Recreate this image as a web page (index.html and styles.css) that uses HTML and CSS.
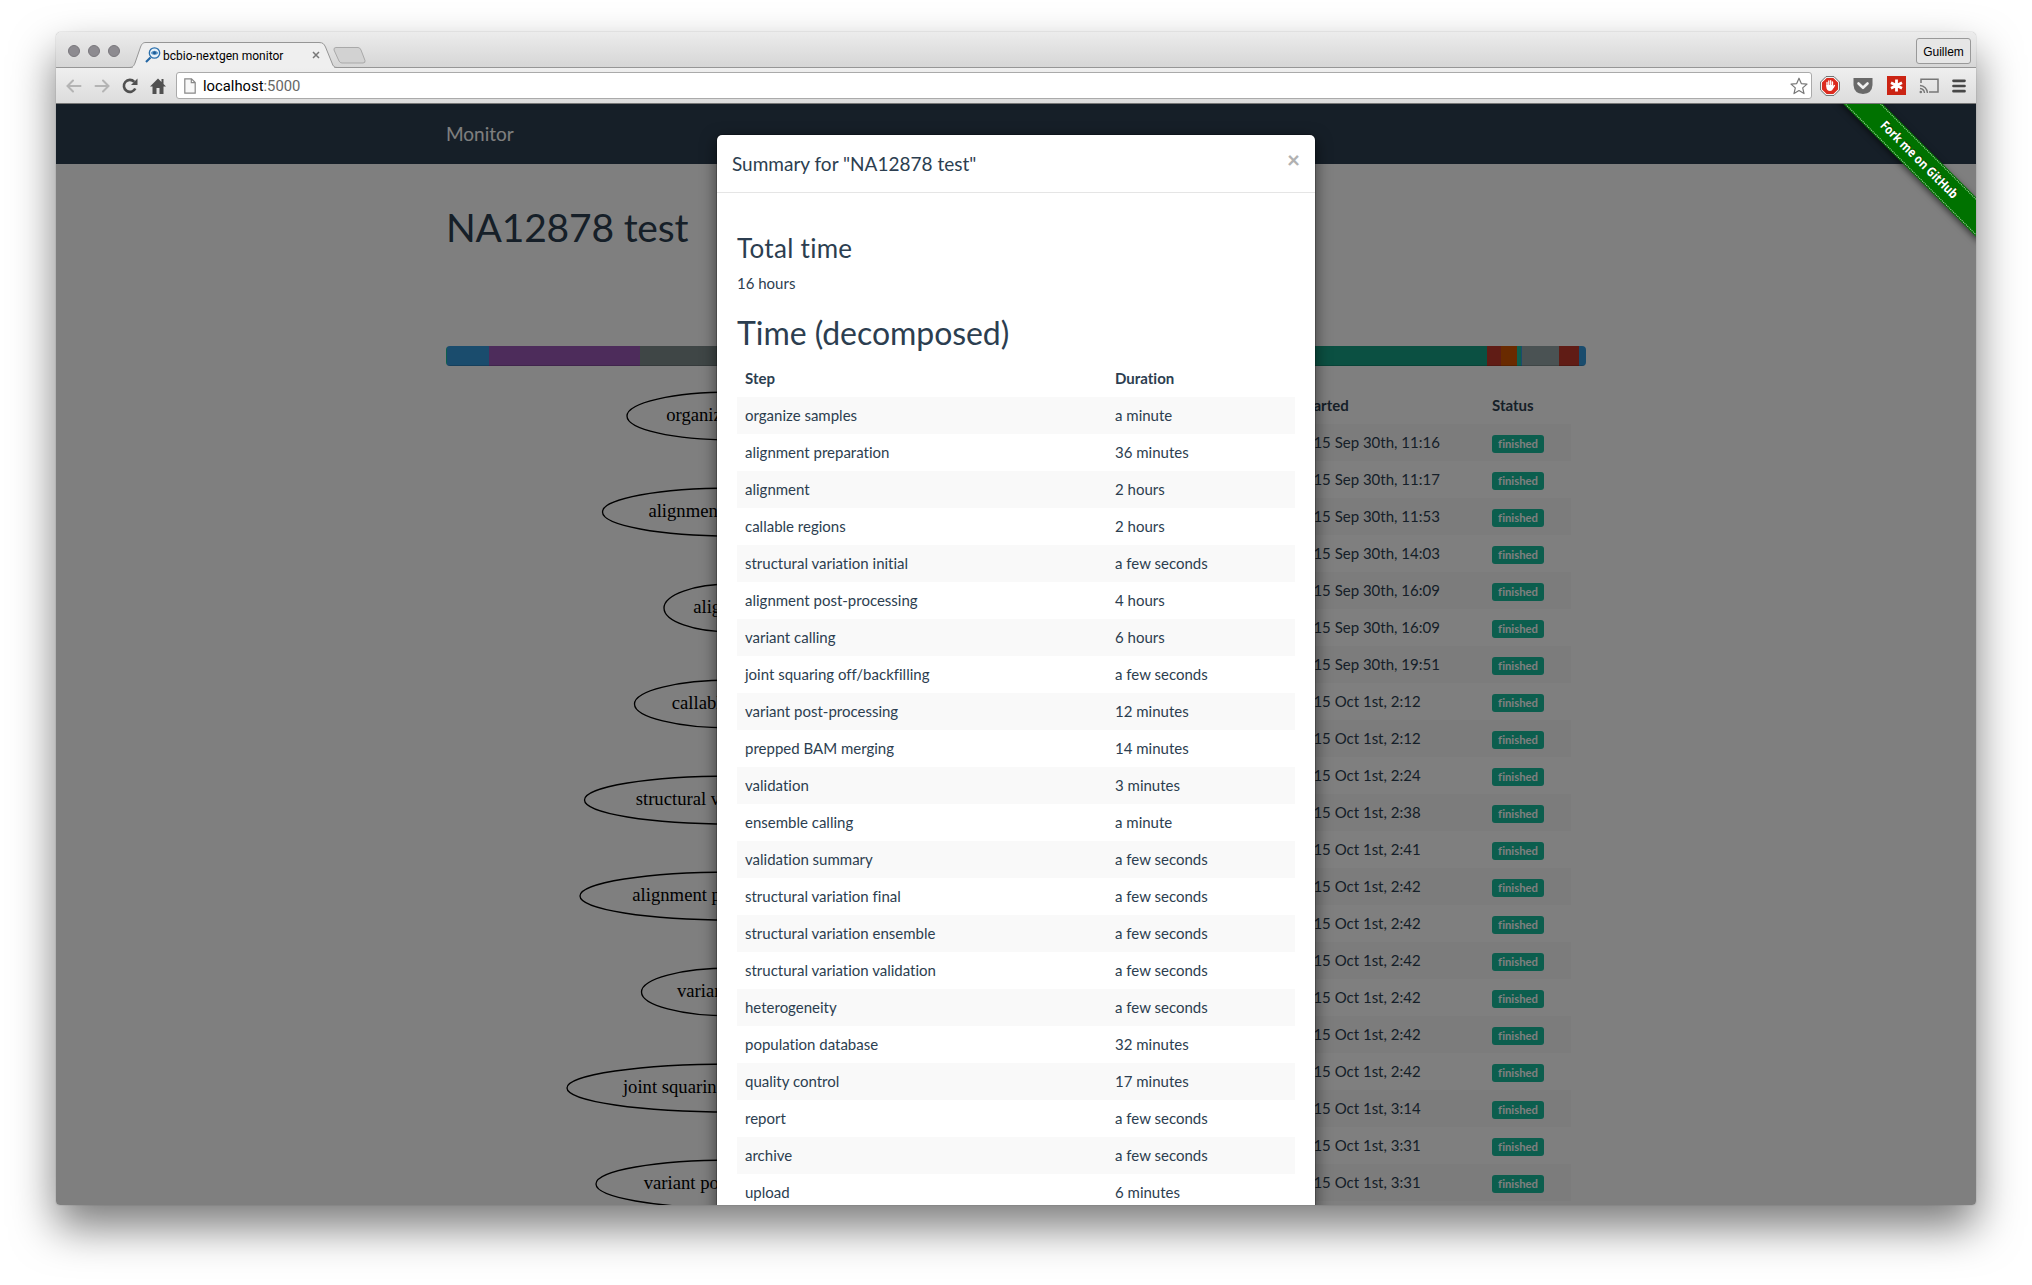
FILE: index.html
```html
<!DOCTYPE html>
<html lang="en">
<head>
<meta charset="utf-8">
<title>bcbio-nextgen monitor</title>
<link rel="stylesheet" href="styles.css">
</head>
<body>
<div class="window">
  <header class="tabstrip">
    <div class="lights"><i></i><i></i><i></i></div>
    <div class="tab">
      <svg class="tab-shape" width="208" height="26" viewBox="0 0 208 26"><path d="M0 25.500C4 25.500 5 23.500 6 21L11.500 5C13 1.500 14 .5 17 .5H190C194 .5 195 2 196.500 5L203 21C204 24 205 25.500 208 25.500" fill="#efefef" stroke="#969696"/><path d="M4 25.500H205" stroke="#efefef" stroke-width="1.500"/></svg>
      <svg class="favicon" width="16" height="16" viewBox="0 0 16 16"><path d="M1 15L5.500 10.500" stroke="#2467a4" stroke-width="2.200"/><circle cx="9.500" cy="6" r="5.200" fill="#e8f1f8" stroke="#2b70ad" stroke-width="1.300"/><path d="M5.500 6Q9.500 1.500 13.500 6Q9.500 10 5.500 6Z" fill="#5b95c6"/><circle cx="9.500" cy="5.800" r="1.500" fill="#1c5a94"/></svg>
      <span class="tab-title">bcbio-nextgen monitor</span>
      <svg class="tab-close" width="8" height="8" viewBox="0 0 8 8"><path d="M1 1L7 7M7 1L1 7" stroke="#777" stroke-width="1.500"/></svg>
    </div>
    <svg class="newtab" width="33" height="17" viewBox="0 0 33 17"><path d="M3 .5H25Q27 .5 28 3L32 13.500Q32.500 16 30 16H9Q7 16 6 14L1 3Q.5 .5 3 .5Z" fill="#d2d2d2" stroke="#a9a9a9"/></svg>
    <span class="profile">Guillem</span>
  </header>
  <div class="toolbar">
    <div class="nav-icons">
      <svg width="16" height="14" viewBox="0 0 16 14"><path d="M7 1.500L1.500 7L7 12.500M2 7H14.500" fill="none" stroke="#b4b4b4" stroke-width="2" stroke-linecap="round"/></svg>
      <svg width="16" height="14" viewBox="0 0 16 14"><path d="M9 1.500L14.500 7L9 12.500M14 7H1.500" fill="none" stroke="#b4b4b4" stroke-width="2" stroke-linecap="round"/></svg>
      <svg width="16" height="16" viewBox="0 0 16 16"><path d="M13.300 10.500A6 6 0 1 1 12.300 3.800" fill="none" stroke="#505050" stroke-width="2.600"/><path d="M15.500 .5V7H9Z" fill="#505050"/></svg>
      <svg width="16" height="16" viewBox="0 0 16 16"><path d="M8 .5L0 8.500H2.500V16H6.500V10H9.500V16H13.500V8.500H16L13.500 6V1H11.500V4Z" fill="#505050"/></svg>
    </div>
    <div class="omnibox">
      <svg width="12" height="16" viewBox="0 0 12 16"><path d="M.8 .8H7.500L11.200 4.500V15.200H.8ZM7.300 .8V4.700H11.200" fill="#f8f8f8" stroke="#888" stroke-width="1.200"/></svg>
      <span class="url">localhost<b>:5000</b></span>
      <svg class="star" width="18" height="18" viewBox="0 0 18 18"><path d="M9 1.200L11.300 6.600L17 7.100L12.700 10.900L14 16.600L9 13.600L4 16.600L5.300 10.900L1 7.100L6.700 6.600Z" fill="#fff" stroke="#777" stroke-width="1.200" stroke-linejoin="round"/></svg>
    </div>
    <div class="extensions">
      <svg width="20" height="20" viewBox="0 0 20 20"><path d="M6 .6H14L19.400 6V14L14 19.400H6L.6 14V6Z" fill="#fff" stroke="#666"/><path d="M6.600 2H13.400L18 6.600V13.400L13.400 18H6.600L2 13.400V6.600Z" fill="#dc2b1e"/><path d="M7 10V6.500M8.800 10V5M10.700 10V4.700M12.500 10V6M13.300 11.500L14.500 9.500" stroke="#fff" stroke-width="1.300" stroke-linecap="round"/><path d="M6.300 9H13.200L13.800 10.800Q12.800 15 10 15Q6.600 15 6.300 11Z" fill="#fff"/></svg>
      <svg width="20" height="18" viewBox="0 0 20 18"><path d="M.5 1H19.500V8Q19 16.500 10 17Q1 16.500 .5 8Z" fill="#696969"/><path d="M5.500 6.500L10 10.800L14.500 6.500" fill="none" stroke="#f0f0f0" stroke-width="2.600" stroke-linecap="round" stroke-linejoin="round"/></svg>
      <svg width="19" height="19" viewBox="0 0 19 19"><rect width="19" height="19" fill="#cb2413"/><path d="M9.500 3.500V15.500M4 6.800L15 12.200M15 6.800L4 12.200" stroke="#fff" stroke-width="2.800"/></svg>
      <svg width="20" height="16" viewBox="0 0 20 16"><path d="M2 5V1.200H19V14H10" fill="none" stroke="#777" stroke-width="1.500"/><path d="M1 7.500A8 8 0 0 1 8.500 15M1 10.500A5 5 0 0 1 5.500 15" fill="none" stroke="#777" stroke-width="1.400"/><circle cx="1.800" cy="14" r="1.300" fill="#777"/></svg>
      <svg width="14" height="14" viewBox="0 0 14 14"><path d="M1.500 1.800H12.500M1.500 7H12.500M1.500 12.200H12.500" stroke="#484848" stroke-width="2.700" stroke-linecap="round"/></svg>
    </div>
  </div>
  <main class="page">
    <nav class="navbar"><div class="container">Monitor</div></nav>
    <div class="container">
      <h1>NA12878 test</h1>
      <div class="progress" id="progress"></div>
      <div class="columns">
        <svg class="graph" id="graph" width="570" height="900"></svg>
        <table class="table runs">
          <colgroup><col class="c-step"><col class="c-start"><col></colgroup>
          <thead><tr><th></th><th class="started">Started</th><th>Status</th></tr></thead>
          <tbody id="runs"></tbody>
        </table>
      </div>
    </div>
    <div class="backdrop"></div>
    <section class="modal">
      <div class="modal-header"><h4>Summary for "NA12878 test"</h4><span class="close">×</span></div>
      <div class="modal-body">
        <h3>Total time</h3>
        <p>16 hours</p>
        <h2>Time (decomposed)</h2>
        <table class="table">
          <colgroup><col class="c-name"><col></colgroup>
          <thead><tr><th>Step</th><th>Duration</th></tr></thead>
          <tbody id="steps"></tbody>
        </table>
      </div>
    </section>
    <div class="ribbon"><div class="ribbon-edge"><span>Fork me on GitHub</span></div></div>
  </main>
</div>
<script src="app.js"></script>
</body>
</html>
```
FILE: styles.css
```css
* { box-sizing: border-box; }
html, body { height: 100%; }
body {
  margin: 0;
  padding: 32px 56px 80px;
  overflow: hidden;
  background: #fff;
  color: #2c3e50;
  font: 15px/1.42857 Lato, sans-serif;
  font-variant-ligatures: none;
}
.window {
  height: 1173px;
  display: flex;
  flex-direction: column;
  border-radius: 5px 5px 4px 4px;
  box-shadow: 0 0 1px rgba(0,0,0,.5), 0 22px 44px rgba(0,0,0,.52);
}
.tabstrip {
  height: 36px;
  display: flex;
  align-items: flex-end;
  border-radius: 5px 5px 0 0;
  background: linear-gradient(#ececec, #d6d6d6);
  border-bottom: 1px solid #969696;
  font-family: Roboto, sans-serif;
  color: #000;
}
.lights { display: flex; gap: 8px; padding: 0 9px 10px 12px; }
.lights i { width: 12px; height: 12px; border-radius: 50%; background: #8d8b90; border: 1px solid #79777c; }
.tab { position: relative; display: flex; align-items: center; width: 208px; height: 26px; margin-bottom: -1px; padding: 0 17px 0 16px; gap: 2px; }
.tab-shape { position: absolute; left: 0; top: 0; }
.favicon, .tab-title, .tab-close { position: relative; }
.tab-title { flex: 1; padding-top: 2px; font-size: 12px; letter-spacing: .02px; white-space: nowrap; line-height: 24px; }
.newtab { margin: 0 auto 3px -4px; }
.profile { width: 55px; height: 26px; margin: 0 5px 3px 0; border: 1px solid #999; border-radius: 3px; font: 12px/26px "Liberation Sans", sans-serif; text-align: center; background: #e6e6e6; }
.toolbar {
  height: 36px;
  display: flex;
  align-items: center;
  padding: 0 10px;
  background: linear-gradient(#efefef, #dcdcdc);
  border-bottom: 1px solid #777;
}
.nav-icons { display: flex; gap: 12px; width: 110px; align-items: center; }
.omnibox { flex: 1; height: 27px; display: flex; align-items: center; padding: 0 3px 0 7px; gap: 7px; background: #fff; border: 1px solid #aaa; border-radius: 3px; }
.url { font: 14.800px/26px Roboto, sans-serif; color: #000; flex: 1; padding-top: 1px; }
.url b { font-weight: 400; color: #666; }
.extensions { display: flex; align-items: center; gap: 13.200px; padding-left: 8.500px; }
.page { position: relative; flex: 1; min-height: 0; overflow: hidden; background: #fff; border-radius: 0 0 4px 4px; }
.container { width: 1140px; margin: 0 auto; }
.navbar { height: 60px; background: #2c3e50; color: #fff; font-size: 19px; line-height: 60px; }
h1, h2, h3, h4 { font-weight: 400; line-height: 1.1; margin: 21px 0 10.500px; }
h1 { font-size: 39px; letter-spacing: -.2px; margin: 42px 0 97px; }
h2 { font-size: 32px; }
h3 { font-size: 26px; letter-spacing: .3px; }
p { margin: 0 0 10.500px; }
.progress { display: flex; height: 20px; border-radius: 4px; overflow: hidden; margin-bottom: 21px; }
.progress i { height: 20px; flex: none; box-shadow: inset 0 -1px 0 rgba(0,0,0,.15); }
.columns { display: flex; gap: 15px; align-items: flex-start; }
.graph { flex: none; font: 18.667px "Liberation Serif", serif; }
.graph ellipse { fill: none; stroke: #000; stroke-width: 1.333; }
.graph text { text-anchor: middle; }
.graph line { stroke: #000; stroke-width: 1.333; }
.table { width: 100%; border-collapse: collapse; table-layout: fixed; }
.table th, .table td { height: 37px; padding: 8px; line-height: 21px; text-align: left; }
.table tbody tr:nth-child(odd) { background: #f9f9f9; }
.runs { width: 540px; }
.c-step { width: 257px; }
.c-start { width: 196px; }
.c-name { width: 370px; }
.table .started { padding-left: 12px; }
.table .status { padding: 0 8px; line-height: 0; vertical-align: top; }
.label { display: inline-block; width: 52px; height: 18px; margin-top: 11px; border-radius: 3px; background: #18bc9c; color: #fff; font-size: 11.250px; font-weight: 700; line-height: 18px; text-align: center; }
.backdrop { position: absolute; inset: 0; background: rgba(0,0,0,.5); }
.modal { position: absolute; left: 660px; top: 30px; width: 600px; height: 1200px; background: #fff; background-clip: padding-box; border: 1px solid rgba(0,0,0,.2); border-radius: 6px; box-shadow: 0 5px 15px rgba(0,0,0,.5); }
.modal-header { height: 58px; display: flex; justify-content: space-between; padding: 15px; border-bottom: 1px solid #e5e5e5; }
.modal-header h4 { margin: 0; font-size: 19px; line-height: 27px; }
.close { font-size: 22.500px; font-weight: 900; line-height: 1; margin-top: -1px; color: #000; opacity: .3; }
.modal-body { padding: 20px; }
.modal-body h2 { margin: 20px 0 10.500px; letter-spacing: -.05px; }
.ribbon { position: absolute; top: 42px; right: -43px; width: 200px; height: 28px; padding: 1px 0; background: #007200; box-shadow: 0 2px 6px rgba(0,0,0,.55); transform: rotate(45deg); }
.ribbon-edge { height: 26px; border: 1px dotted rgba(255,255,255,.7); border-width: 1px 0; color: #fff; font: 700 13px/23px "Noto Sans", sans-serif; text-align: center; text-shadow: 0 -1px rgba(0,0,0,.5); }
.ribbon span { display: inline-block; transform: scaleX(.85); }
```
FILE: app.js
```js
const steps = [
  ['organize samples', 'a minute', 'Sep 30th, 11:16', 104],
  ['alignment preparation', '36 minutes', 'Sep 30th, 11:17', 128.5],
  ['alignment', '2 hours', 'Sep 30th, 11:53', 67],
  ['callable regions', '2 hours', 'Sep 30th, 14:03', 96.5],
  ['structural variation initial', 'a few seconds', 'Sep 30th, 16:09', 146.5],
  ['alignment post-processing', '4 hours', 'Sep 30th, 16:09', 151],
  ['variant calling', '6 hours', 'Sep 30th, 19:51', 89.5],
  ['joint squaring off/backfilling', 'a few seconds', 'Oct 1st, 2:12', 164],
  ['variant post-processing', '12 minutes', 'Oct 1st, 2:12', 135],
  ['prepped BAM merging', '14 minutes', 'Oct 1st, 2:24'],
  ['validation', '3 minutes', 'Oct 1st, 2:38'],
  ['ensemble calling', 'a minute', 'Oct 1st, 2:41'],
  ['validation summary', 'a few seconds', 'Oct 1st, 2:42'],
  ['structural variation final', 'a few seconds', 'Oct 1st, 2:42'],
  ['structural variation ensemble', 'a few seconds', 'Oct 1st, 2:42'],
  ['structural variation validation', 'a few seconds', 'Oct 1st, 2:42'],
  ['heterogeneity', 'a few seconds', 'Oct 1st, 2:42'],
  ['population database', '32 minutes', 'Oct 1st, 2:42'],
  ['quality control', '17 minutes', 'Oct 1st, 3:14'],
  ['report', 'a few seconds', 'Oct 1st, 3:31'],
  ['archive', 'a few seconds', 'Oct 1st, 3:31'],
  ['upload', '6 minutes', null]
];
const segments = [
  [1, '#18bc9c'], [42, '#3498db'], [151, '#9b59b6'], [160, '#7f8c8d'], [687, '#16a085'],
  [14, '#c0392b'], [16, '#d35400'], [4, '#1abc9c'], [1, '#3498db'], [37, '#95a5a6'], [20, '#c0392b'], [7, '#3498db']
];
document.getElementById('steps').innerHTML = steps
  .map(s => `<tr><td>${s[0]}</td><td>${s[1]}</td></tr>`).join('');
document.getElementById('runs').innerHTML = steps.filter(s => s[2])
  .map(s => `<tr><td></td><td>2015 ${s[2]}</td><td class="status"><span class="label">finished</span></td></tr>`).join('');
document.getElementById('progress').innerHTML = segments
  .map(([w, c]) => `<i style="width:${w}px;background:${c}"></i>`).join('');
document.getElementById('graph').innerHTML = steps.filter(s => s[3])
  .map((s, i) => {
    const y = 29 + i * 96;
    const link = i ? `<line x1="285" y1="${y - 72}" x2="285" y2="${y - 24}"/>` : '';
    return `${link}<ellipse cx="285" cy="${y}" rx="${s[3]}" ry="24"/><text x="284.500" y="${y + 5}">${s[0]}</text>`;
  }).join('');
```
